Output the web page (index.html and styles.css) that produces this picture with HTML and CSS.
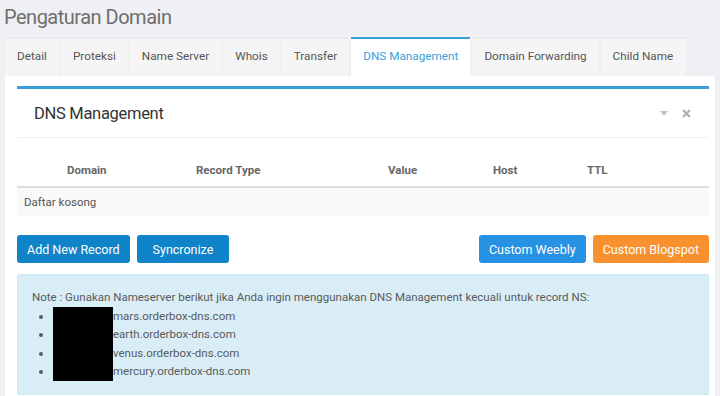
FILE: index.html
```html
<!DOCTYPE html>
<html lang="id">
<head>
  <meta charset="UTF-8"/>
  <meta name="viewport" content="width=device-width, initial-scale=1.0"/>
  <title>Pengaturan Domain</title>
  <link rel="stylesheet" href="styles.css"/>
</head>
<body>
  <h1 class="page-title">Pengaturan Domain</h1>

  <nav class="tabs">
    <a href="#" class="tab">Detail</a>
    <a href="#" class="tab">Proteksi</a>
    <a href="#" class="tab">Name Server</a>
    <a href="#" class="tab">Whois</a>
    <a href="#" class="tab">Transfer</a>
    <a href="#" class="tab active">DNS Management</a>
    <a href="#" class="tab">Domain Forwarding</a>
    <a href="#" class="tab">Child Name</a>
  </nav>

  <main class="tab-content">
    <section class="box">
      <header class="box-header">
        <h2 class="box-title">DNS Management</h2>
        <div class="box-tools">
          <svg class="tool-caret" width="8" height="5" viewBox="0 0 8 5"><path d="M0 0h8L4 5z" fill="#c4c4c4"/></svg>
          <svg class="tool-close" width="9" height="9" viewBox="0 0 9 9"><path d="M1 1l7 7M8 1L1 8" stroke="#b0b0b0" stroke-width="2.2"/></svg>
        </div>
      </header>

      <div class="box-body">
        <table class="dns-table">
          <colgroup>
            <col style="width:42px"/>
            <col style="width:129px"/>
            <col style="width:192px"/>
            <col style="width:105px"/>
            <col style="width:94px"/>
            <col/>
          </colgroup>
          <thead>
            <tr>
              <th></th>
              <th>Domain</th>
              <th>Record Type</th>
              <th>Value</th>
              <th>Host</th>
              <th>TTL</th>
            </tr>
          </thead>
          <tbody>
            <tr class="empty-row">
              <td colspan="6">Daftar kosong</td>
            </tr>
          </tbody>
        </table>

        <div class="actions">
          <div class="actions-left">
            <button class="btn btn-primary">Add New Record</button>
            <button class="btn btn-primary btn-wide">Syncronize</button>
          </div>
          <div class="actions-right">
            <button class="btn btn-info">Custom Weebly</button>
            <button class="btn btn-warning">Custom Blogspot</button>
          </div>
        </div>

        <div class="note">
          <p>Note : Gunakan Nameserver berikut jika Anda ingin menggunakan DNS Management kecuali untuk record NS:</p>
          <ul class="ns-list">
            <li><span class="redacted"></span>mars.orderbox-dns.com</li>
            <li><span class="redacted"></span>earth.orderbox-dns.com</li>
            <li><span class="redacted"></span>venus.orderbox-dns.com</li>
            <li><span class="redacted"></span>mercury.orderbox-dns.com</li>
          </ul>
        </div>
      </div>
    </section>
  </main>
</body>
</html>
```

FILE: styles.css
```css
:root {
  --page-bg:   #eef0f3;
  --tab-bg:    #f5f5f5;
  --blue:      #3c9fd8;
  --primary:   #0f84c8;
  --info:      #2791e4;
  --warning:   #f8912e;
  --text:      #555;
  --font:      Roboto, 'Liberation Sans', sans-serif;
}

* {
  box-sizing: border-box;
  margin: 0;
  padding: 0;
}

body {
  background: var(--page-bg);
  color: var(--text);
  font-family: var(--font);
  height: 100vh;
  overflow: hidden;
  display: flex;
  flex-direction: column;
}

/* Title */
.page-title {
  font-size: 20px;
  font-weight: 400;
  color: #6e6e6e;
  line-height: 24px;
  padding: 5px 0 0 4px;
  letter-spacing: -0.5px;
}

/* Tabs */
.tabs {
  display: flex;
  gap: 2px;
  padding: 8px 0 0 5px;
}
.tab {
  display: block;
  background: var(--tab-bg);
  color: #555;
  text-decoration: none;
  font-size: 11.75px;
  line-height: 16px;
  padding: 9px 12px 10px;
  border-top: 2px solid #e9eaec;
}
.tab.active {
  background: #fff;
  color: var(--blue);
  border-top-color: var(--blue);
  padding-bottom: 12px;
}

/* Tab content */
.tab-content {
  flex: 1;
  background: #fff;
  margin: 0 5px;
  padding: 10px 6px 0 12px;
}

/* Box */
.box {
  border-top: 3px solid var(--blue);
}
.box-header {
  display: flex;
  align-items: center;
  justify-content: space-between;
  height: 49px;
  border-bottom: 1px solid #f0f0f0;
  padding: 0 18px 0 17px;
}
.box-title {
  font-size: 16.5px;
  font-weight: 400;
  color: #333;
  letter-spacing: -0.3px;
}
.box-tools {
  display: flex;
  align-items: center;
  gap: 14px;
}
.tool-caret { margin-top: 1px; }

/* Table */
.dns-table {
  width: 100%;
  table-layout: fixed;
  border-collapse: collapse;
  margin-top: 16px;
  font-size: 11.5px;
}
.dns-table th {
  text-align: left;
  font-weight: 700;
  color: #666;
  padding: 8px 8px 8px;
  line-height: 16px;
  border-bottom: 2px solid #dedede;
}
.dns-table td {
  padding: 6px 7px 5px;
  line-height: 17px;
  color: #555;
}
.empty-row {
  background: #f9f9f9;
}

/* Buttons */
.actions {
  display: flex;
  justify-content: space-between;
  margin-top: 19px;
}
.actions-left,
.actions-right {
  display: flex;
  gap: 7px;
}
.btn {
  font-family: var(--font);
  font-size: 12.5px;
  color: #fff;
  border: none;
  border-radius: 3px;
  height: 28px;
  padding: 0 10px;
  cursor: pointer;
}
.btn-wide    { padding: 0 16px; }
.btn-primary { background: var(--primary); }
.btn-info    { background: var(--info); }
.btn-warning { background: var(--warning); }

/* Note */
.note {
  margin-top: 11px;
  background: #d9edf7;
  border: 1px solid #c8e8f2;
  border-radius: 2px;
  padding: 13px 14px 13px;
  font-size: 11.5px;
  line-height: 18.6px;
  color: #5a5a5a;
}
.ns-list {
  padding-left: 21px;
}
.redacted {
  display: inline-block;
  vertical-align: top;
  width: 60px;
  height: 18.6px;
  background: #000;
}
```
